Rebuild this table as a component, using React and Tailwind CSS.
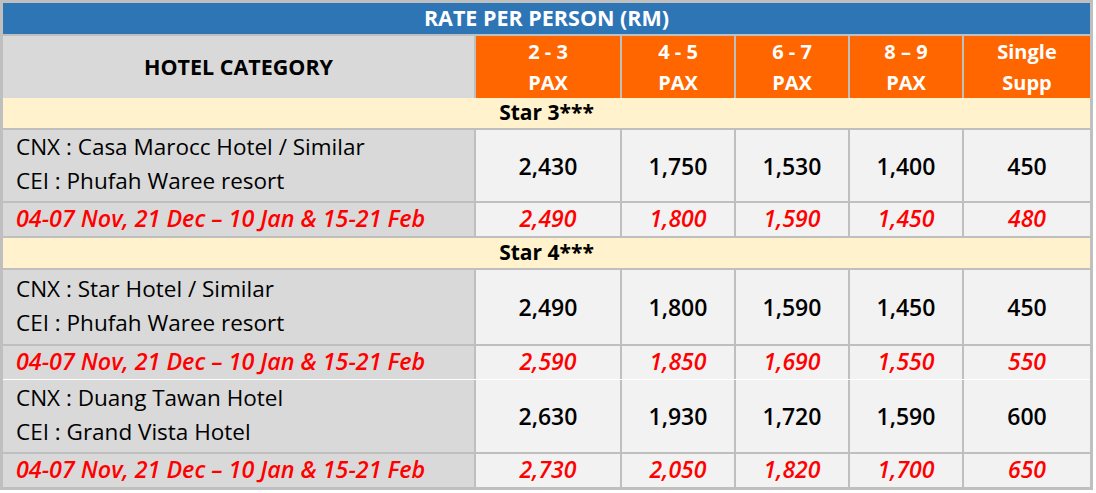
import React from 'react';

const cols = ['2 - 3', '4 - 5', '6 - 7', '8 – 9'];
const promo = '04-07 Nov, 21 Dec – 10 Jan & 15-21 Feb';

const sections = [
  {
    star: 'Star 3***',
    hotels: [
      {
        lines: ['CNX : Casa Marocc Hotel / Similar', 'CEI : Phufah Waree resort'],
        rates: ['2,430', '1,750', '1,530', '1,400', '450'],
        peak: ['2,490', '1,800', '1,590', '1,450', '480'],
        h: 'h-[71px]',
      },
    ],
  },
  {
    star: 'Star 4***',
    hotels: [
      {
        lines: ['CNX : Star Hotel / Similar', 'CEI : Phufah Waree resort'],
        rates: ['2,490', '1,800', '1,590', '1,450', '450'],
        peak: ['2,590', '1,850', '1,690', '1,550', '550'],
        h: 'h-[74px]',
      },
      {
        lines: ['CNX : Duang Tawan Hotel', 'CEI : Grand Vista Hotel'],
        rates: ['2,630', '1,930', '1,720', '1,590', '600'],
        peak: ['2,730', '2,050', '1,820', '1,700', '650'],
        h: 'h-[73px]',
        joined: true,
      },
    ],
  },
];

const grid = 'grid grid-cols-[471px_144px_112px_112px_112px_126px] gap-x-[2px]';
const text = "font-['Open_Sans','Liberation_Sans',sans-serif]";

const HotelBlock = ({ hotel }) => (
  <>
    <div className={`${grid} ${hotel.h} ${hotel.joined ? '-mt-[2px] border-t border-white' : ''}`}>
      <div className="bg-[#d9d9d9] pl-[13px] pb-[3px] flex flex-col justify-center gap-[6px] text-[22.5px] leading-[28px] text-black">
        {hotel.lines.map((l) => (
          <div key={l}>{l}</div>
        ))}
      </div>
      {hotel.rates.map((r, i) => (
        <div key={i} className="bg-[#f2f2f2] flex items-center justify-center text-[23px] leading-[28px] font-semibold text-black">
          {r}
        </div>
      ))}
    </div>
    <div className={`${grid} h-[33px] overflow-hidden`}>
      <div className="bg-[#d9d9d9] pl-[13px] pb-[3px] flex items-center text-[23.3px] leading-[26px] font-semibold italic text-[#ff0000]">
        {promo}
      </div>
      {hotel.peak.map((r, i) => (
        <div key={i} className="bg-[#f2f2f2] pb-[3px] flex items-center justify-center text-[23px] leading-[26px] font-semibold italic text-[#ff0000]">
          {r}
        </div>
      ))}
    </div>
  </>
);

export default function App() {
  return (
    <div className="w-[1096px] h-[493px] bg-white">
      <div className={`w-[1093px] bg-[#bfbfbf] p-[3px] flex flex-col gap-y-[2px] ${text}`}>
        <div className="h-[31px] bg-[#2e75b6] flex items-center justify-center text-white text-[21.5px] font-bold">
          RATE PER PERSON (RM)
        </div>
        <div className={`${grid} h-[60px]`}>
          <div className="bg-[#d9d9d9] flex items-center justify-center text-[21.5px] font-bold text-black">
            HOTEL CATEGORY
          </div>
          {cols.map((c) => (
            <div key={c} className="bg-[#ff6600] flex flex-col items-center justify-center text-white text-[20px] font-bold leading-[31px]">
              <span>{c}</span>
              <span>PAX</span>
            </div>
          ))}
          <div className="bg-[#ff6600] flex flex-col items-center justify-center text-white text-[20px] font-bold leading-[31px]">
            <span>Single</span>
            <span>Supp</span>
          </div>
        </div>
        {sections.map((s) => (
          <React.Fragment key={s.star}>
            <div className="h-[30px] bg-[#fff2cc] flex items-center justify-center text-[21px] font-bold text-black">
              {s.star}
            </div>
            {s.hotels.map((h) => (
              <HotelBlock key={h.lines[0]} hotel={h} />
            ))}
          </React.Fragment>
        ))}
      </div>
    </div>
  );
}
